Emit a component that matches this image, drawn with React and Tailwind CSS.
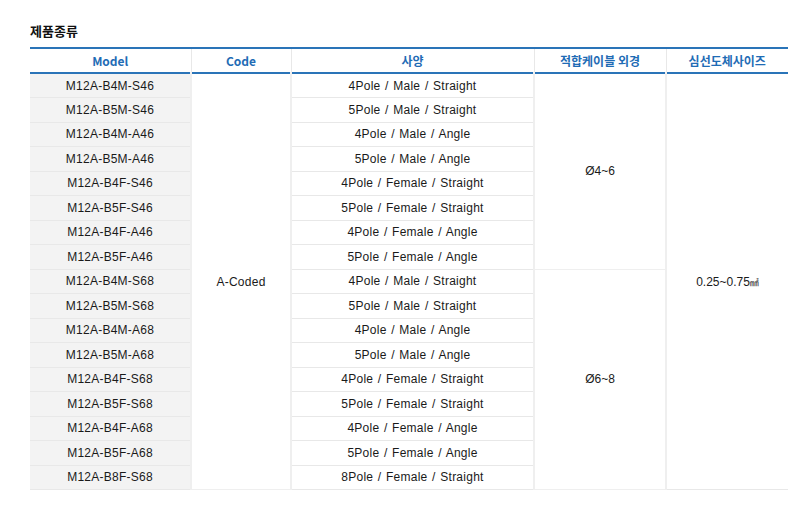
import React from 'react'

const rows = [
  ['M12A-B4M-S46', '4Pole / Male / Straight'],
  ['M12A-B5M-S46', '5Pole / Male / Straight'],
  ['M12A-B4M-A46', '4Pole / Male / Angle'],
  ['M12A-B5M-A46', '5Pole / Male / Angle'],
  ['M12A-B4F-S46', '4Pole / Female / Straight'],
  ['M12A-B5F-S46', '5Pole / Female / Straight'],
  ['M12A-B4F-A46', '4Pole / Female / Angle'],
  ['M12A-B5F-A46', '5Pole / Female / Angle'],
  ['M12A-B4M-S68', '4Pole / Male / Straight'],
  ['M12A-B5M-S68', '5Pole / Male / Straight'],
  ['M12A-B4M-A68', '4Pole / Male / Angle'],
  ['M12A-B5M-A68', '5Pole / Male / Angle'],
  ['M12A-B4F-S68', '4Pole / Female / Straight'],
  ['M12A-B5F-S68', '5Pole / Female / Straight'],
  ['M12A-B4F-A68', '4Pole / Female / Angle'],
  ['M12A-B5F-A68', '5Pole / Female / Angle'],
  ['M12A-B8F-S68', '8Pole / Female / Straight'],
]

function App() {
  const cell = 'h-[24.5px] p-0 text-center align-middle border-b border-[#e8e8e8] tracking-[0.25px]'
  const side = 'border-l-2 border-r-2 border-[#efefef]'

  return (
    <div className="w-[802px] h-[512px] bg-white text-[#1a1a1a] font-['Liberation_Sans','Noto_Sans_CJK_KR',sans-serif] text-[12px]">
      <div className="pl-[30px] pt-[22px] h-[47px]">
        <h1 className="text-[13px] font-bold text-[#111] font-['Noto_Sans_CJK_KR',sans-serif] leading-[18px]">제품종류</h1>
      </div>

      <table className="ml-[30px] w-[758px] border-collapse table-fixed">
        <colgroup>
          <col className="w-[161px]" />
          <col className="w-[100px]" />
          <col className="w-[243px]" />
          <col className="w-[132px]" />
          <col className="w-[122px]" />
        </colgroup>
        <thead>
          <tr className="h-[25px] border-t-2 border-b-2 border-[#2a74b8] text-[#1f6cb5] font-bold font-['Noto_Sans_CJK_KR',sans-serif] text-[12px]">
            <th className="font-bold">Model</th>
            <th className="font-bold border-l border-[#e8e8e8]">Code</th>
            <th className="font-bold border-l border-[#e8e8e8]">사양</th>
            <th className="font-bold border-l border-[#e8e8e8]">적합케이블 외경</th>
            <th className="font-bold border-l border-[#e8e8e8]">심선도체사이즈</th>
          </tr>
        </thead>
        <tbody>
          {rows.map(([model, spec], i) => (
            <tr key={model}>
              <td className={cell + ' bg-[#f3f3f3]'}>{model}</td>
              {i === 0 && (
                <td rowSpan={17} className={'p-0 text-center align-middle border-b border-[#e8e8e8] tracking-[0.25px] ' + side}>A-Coded</td>
              )}
              <td className={cell + ' [word-spacing:1px]'}>{spec}</td>
              {i === 0 && (
                <td rowSpan={8} className={'p-0 text-center align-middle border-b border-[#e8e8e8] ' + side}>Ø4~6</td>
              )}
              {i === 8 && (
                <td rowSpan={9} className={'p-0 text-center align-middle border-b border-[#e8e8e8] ' + side}>Ø6~8</td>
              )}
              {i === 0 && (
                <td rowSpan={17} className="p-0 text-center align-middle border-b border-[#e8e8e8]">
                  0.25~0.75<span className="text-[9px]">㎟</span>
                </td>
              )}
            </tr>
          ))}
        </tbody>
      </table>
    </div>
  )
}

export default App
